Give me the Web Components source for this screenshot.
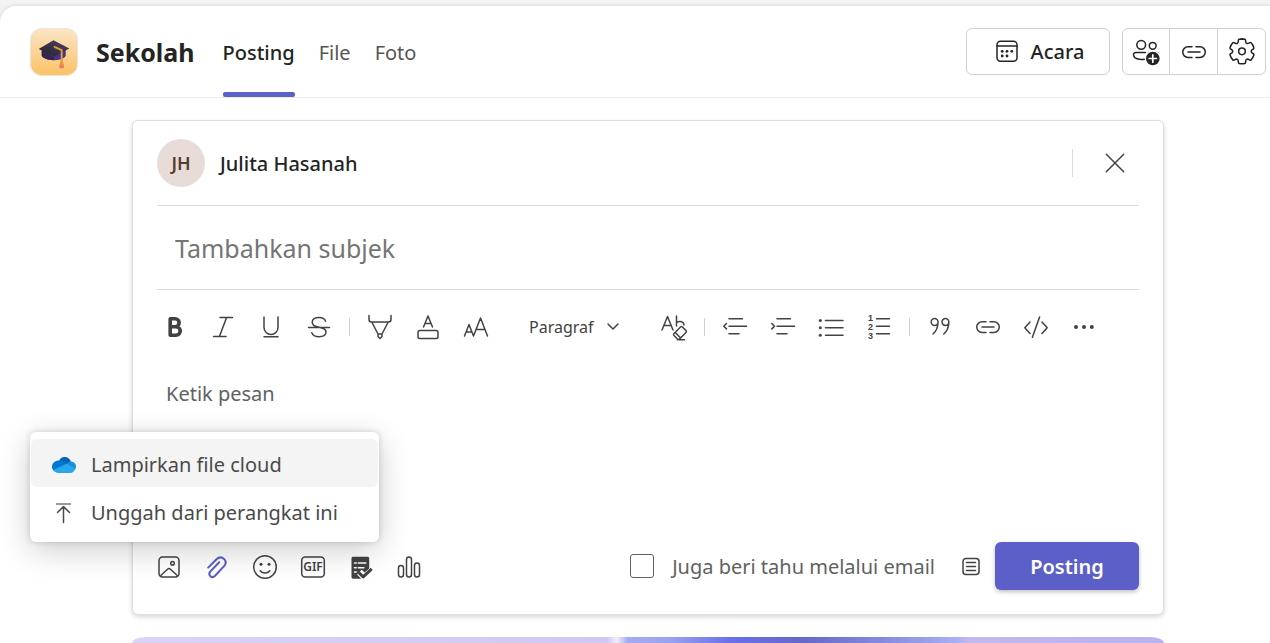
<!DOCTYPE html>
<html lang="id">
<head>
<meta charset="utf-8">
<title>Sekolah - Posting</title>
<style>
  html, body { height: 100%; }
  body { margin: 0; overflow: hidden; background: #f3f3f3; color: #242424; font: 20px/28px "Noto Sans", "Open Sans", sans-serif; }
</style>
</head>
<body>
<channel-page>
  <channel-header slot="header" name="Sekolah"></channel-header>
  <post-composer author="Julita Hasanah" initials="JH">
    <attach-menu slot="attach-menu">
      <menu-entry icon="cloud" active>Lampirkan file cloud</menu-entry>
      <menu-entry icon="upload">Unggah dari perangkat ini</menu-entry>
    </attach-menu>
  </post-composer>
  <channel-banner></channel-banner>
</channel-page>

<script>
const ICONS = {
  bold: '<path stroke-width="3.6" d="M7.2 3.8h5a3.9 3.9 0 0 1 0 7.9h-5zM7.2 11.7h5.8a4.2 4.2 0 0 1 0 8.5H7.2z"/>',
  italic: '<path d="M9 2.5h12.5M2.5 21.5H15M15.6 2.5 8.4 21.5"/>',
  underline: '<path d="M5 2v10.5a7 7 0 0 0 14 0V2M5 21.7h14"/>',
  strike: '<path d="M18.6 6.2C17.5 3.500 15 2.500 12 2.500c-4 0-6.800 1.700-6.800 4.700 0 3 2.500 4.300 6.800 5 4.500.7 7 1.900 7 4.900 0 3-2.800 4.700-7 4.700-3.500 0-6.200-1.200-7.200-4M1.500 12.500h21"/>',
  highlight: '<path d="M1 .5v4C1 6 2 7 3.500 7h17C22 7 23 6 23 4.500v-4M3.800 7l6.200 12h4l6.200-12M10 19v2.500l2 2 2-2V19"/>',
  fontcolor: '<path d="M7.500 12 12 1l4.500 11M9 8.500h6"/><rect x="2" y="15.500" width="20" height="8" rx="1.500"/>',
  fontsize: '<path d="M.5 21 5 9.500 9.500 21M2 17h6M9.500 21l7-18 7 18M12 14.500h9"/>',
  clear: '<path d="M0 15 5.500 1.500 11 15M2 10.500h7M14.500 1v10M14.500 8c1-2 7-2.500 7.500 2M12 18.500l6.500-6.500c.6-.6 1.300-.6 1.900 0l3.600 3.600c.6.6.6 1.300 0 1.900l-6.200 6.300c-.8.8-1.800.8-2.600 0L12 20.500c-.6-.6-.6-1.400 0-2zM13.200 17.500l5 5M15.500 24.800h7"/>',
  outdent: '<path d="M3.500 8.500.8 11.200l2.700 2.700M6 3.700h13.500M6 11.200h17.500M6 18.700h10"/>',
  indent: '<path d="M.8 8.500l2.700 2.700L.8 13.900M6 3.700h13.500M6 11.200h17.500M6 18.700h10"/>',
  bullets: '<path d="M6.500 5.500H24M6.500 12.800H24M6.500 20.200H24"/><g fill="currentColor" stroke="none"><circle cx="1.300" cy="5.500" r="1.500"/><circle cx="1.300" cy="12.800" r="1.500"/><circle cx="1.300" cy="20.200" r="1.500"/></g>',
  numbers: '<path d="M9.500 3.700h13M9.500 11.200h13M9.500 18.700h13"/><g fill="currentColor" stroke="none" font-family="Liberation Sans, sans-serif" font-size="9" font-weight="700"><text x="1" y="6">1</text><text x="1" y="15">2</text><text x="1" y="24">3</text></g>',
  quote: '<path d="M10 7a3.400 3.400 0 1 1-6.800 0 3.400 3.400 0 0 1 6.800 0c0 5-1.500 9-5 12M20.800 7A3.400 3.400 0 1 1 14 7a3.400 3.400 0 0 1 6.800 0c0 5-1.500 9-5 12"/>',
  link: '<path d="M10 6.800H6a5.300 5.300 0 0 0 0 10.600h4M14 6.800h4a5.300 5.300 0 0 1 0 10.600h-4M6 12.100h12"/>',
  code: '<path d="M6 7 .8 12.700 6 18.500M18 7l5.200 5.700L18 18.500M15.600 2 8.400 22.200"/>',
  more: '<g fill="currentColor" stroke="none"><circle cx="4" cy="12" r="2"/><circle cx="12" cy="12" r="2"/><circle cx="19.800" cy="12" r="2"/></g>',
  chevron: '<path d="M7 9l5 5 5-5"/>',
  close: '<path d="M3.300 3.300l17.400 17.400M20.700 3.300 3.300 20.700"/>',
  calendar: '<rect x="2" y="1.200" width="20" height="20" rx="3.500"/><path d="M2 6h20"/><g fill="currentColor" stroke="none"><circle cx="7.200" cy="11.300" r="1.400"/><circle cx="12" cy="11.300" r="1.400"/><circle cx="16.800" cy="11.300" r="1.400"/><circle cx="7.200" cy="16" r="1.400"/><circle cx="12" cy="16" r="1.400"/></g>',
  people: '<circle cx="7.200" cy="4.800" r="4.400"/><circle cx="18.700" cy="5.800" r="3.400"/><path d="M11.500 12.500H2c-1.700 0-2.700 1-2.500 2.500.5 3.500 5.500 5.300 11 4.200M14.500 12.500h8c1 0 1.800.5 2 1.500"/><circle cx="18.800" cy="18.500" r="8" fill="#fff" stroke="none"/><circle cx="18.800" cy="18.500" r="6.800" fill="currentColor" stroke="none"/><path stroke="#fff" stroke-width="1.700" d="M18.800 14.800v7.400M15.100 18.500h7.400"/>',
  gear: '<g transform="translate(-3.400 -4) scale(1.280)"><path stroke-width="1.200" d="M12.010 2.250c.74 0 1.470.1 2.180.25.32.07.55.33.59.65l.17 1.530a1.380 1.380 0 0 0 1.920 1.110l1.400-.61c.3-.13.64-.06.85.17a9.800 9.800 0 0 1 2.200 3.800c.1.3 0 .63-.26.82l-1.250.92a1.380 1.380 0 0 0 0 2.220l1.250.92c.26.19.36.52.27.82a9.800 9.800 0 0 1-2.200 3.800.75.75 0 0 1-.85.17l-1.400-.62a1.380 1.380 0 0 0-1.930 1.120l-.17 1.520a.75.75 0 0 1-.58.65 9.520 9.520 0 0 1-4.400 0 .75.75 0 0 1-.57-.65l-.17-1.520a1.380 1.380 0 0 0-1.930-1.110l-1.400.62a.75.75 0 0 1-.85-.18 9.800 9.800 0 0 1-2.200-3.800c-.1-.3 0-.63.27-.82l1.240-.92a1.380 1.380 0 0 0 0-2.220l-1.240-.92a.75.75 0 0 1-.28-.82 9.800 9.800 0 0 1 2.200-3.800c.23-.23.57-.3.86-.17l1.400.62c.4.17.86.15 1.250-.08.38-.22.63-.6.68-1.040l.17-1.530a.75.75 0 0 1 .58-.65c.72-.16 1.450-.24 2.200-.25Z"/><circle cx="12" cy="12" r="2.600" stroke-width="1.200"/></g>',
  image: '<rect x="2" y="2" width="20" height="20" rx="3.500"/><circle cx="15.500" cy="8.200" r="1.800"/><path d="M3.500 20.800l7-6.600c.9-.9 2.100-.9 3 0l7 6.600"/>',
  attach: '<path stroke-width="2" d="M3.200 12.600l8.300-8.400c4.900-4.600 12 1.200 7.800 6.700l-9.200 9.900c-3.400 3.200-7.500-.8-4.900-4.200l9-9.300"/>',
  smile: '<circle cx="12" cy="12" r="11.300"/><path d="M7.200 15.700c2.400 3 7.200 3 9.600 0"/><g fill="currentColor" stroke="none"><circle cx="8" cy="9.200" r="1.500"/><circle cx="16" cy="9.200" r="1.500"/></g>',
  gif: '<rect x=".7" y="1.900" width="22.600" height="20.200" rx="3.500"/><text x="12" y="16.300" font-size="12" font-weight="600" text-anchor="middle" fill="currentColor" stroke="none">GIF</text>',
  form: '<path fill="currentColor" stroke="none" d="M4.200 1.700h14.300c1 0 1.700.7 1.700 1.700v10l-4.500 4.200-3-2.800-4.700 4.700 4.200 4.200h-8c-1 0-1.700-.7-1.700-1.700V3.400c0-1 .7-1.700 1.700-1.700z"/><path stroke="#fff" stroke-width="1.600" d="M9.300 8h7.500M9.300 12.700h5.500M5.500 8h1.700M5.500 12.700h1.700M5.500 17h1.700"/><path stroke-width="3" stroke-linecap="butt" d="M9.800 17.700l4.400 4.200 8.500-8"/>',
  poll: '<rect x="1.500" y="10.500" width="5" height="11.500" rx="2.500"/><rect x="9.500" y="2" width="5" height="20" rx="2.500"/><rect x="17.500" y="8" width="5" height="14" rx="2.500"/>',
  note: '<rect x="4" y="4.500" width="16" height="16" rx="3"/><path d="M7.500 8.500h9M7.500 12.500h9M7.500 16.500h9"/>',
  upload: '<path stroke="#9a9a9a" stroke-width="2" stroke-linecap="butt" d="M4 3h15"/><path d="M11.500 21.500V5.500M5.500 11.500l6-6 6 6"/>',
  cloud: '<g stroke="none"><path fill="#0364b8" d="M7 8C8 5.500 10 4 12.700 4c3 0 5.300 1.800 6.100 4.600L14 13z"/><path fill="#0078d4" d="M7.300 7.500c1.500 0 2.900.5 4 1.300l4 2.500L5 18.500C2 18.500 0 16.500 0 13.700c0-3.500 3-6.200 7.300-6.200z"/><path fill="#1490df" d="M18.500 8.500c3.200 0 5.500 2.200 5.500 5 0 1.200-.4 2.200-1 3L14.500 11c1.200-1.600 2.500-2.500 4-2.500z"/><path fill="#28a8ea" d="M14.600 10.800 23.300 16c-1 2.200-2.500 4-5 4H6.500c-2.500 0-4.300-1.200-5.300-2.900z"/></g>'
};

class TeamIcon extends HTMLElement {
  connectedCallback() {
    this.attachShadow({ mode: 'open' }).innerHTML = `
      <style>
        :host { display: block; width: 24px; height: 24px; flex: none; }
        svg { display: block; overflow: visible; }
      </style>
      <svg width="24" height="24" viewBox="0 0 24 24" fill="none" stroke="currentColor" stroke-width="1.500" stroke-linecap="round" stroke-linejoin="round" aria-hidden="true">${ICONS[this.getAttribute('name')]}</svg>`;
  }
}
customElements.define('team-icon', TeamIcon);

class IconButton extends HTMLElement {
  connectedCallback() {
    this.attachShadow({ mode: 'open' }).innerHTML = `
      <style>
        :host { display: block; flex: none; color: #424242; }
        :host([accent]) { color: #5b5fc7; }
        button { display: grid; place-items: center; box-sizing: border-box; width: 48px; height: 48px; padding: var(--icon-top, 0px) 0 0; border: 0; background: none; color: inherit; font: inherit; cursor: pointer; }
      </style>
      <button type="button" aria-label="${this.getAttribute('label')}"><team-icon name="${this.getAttribute('icon')}"></team-icon></button>`;
  }
}
customElements.define('icon-button', IconButton);

class ChannelPage extends HTMLElement {
  connectedCallback() {
    this.attachShadow({ mode: 'open' }).innerHTML = `
      <style>
        :host { display: block; height: 100%; box-sizing: border-box; padding-top: 6px; }
        .surface { height: 100%; box-sizing: border-box; background: #fff; border-top-left-radius: 16px; box-shadow: 0 0 4px rgba(0,0,0,.14); }
        main { display: flex; flex-direction: column; gap: 22px; padding: 22px 106px 0 132px; }
      </style>
      <div class="surface"><slot name="header"></slot><main><slot></slot></main></div>`;
  }
}
customElements.define('channel-page', ChannelPage);

class ChannelHeader extends HTMLElement {
  connectedCallback() {
    this.attachShadow({ mode: 'open' }).innerHTML = `
      <style>
        :host { display: flex; align-items: center; height: 91px; padding: 0 4px 0 30px; border-bottom: 1px solid #ebebeb; }
        .logo { display: block; flex: none; width: 48px; height: 48px; }
        h1 { margin: 0 28px 0 18px; font-size: 25px; line-height: 36px; font-weight: 700; }
        nav { display: flex; align-self: stretch; gap: 24px; }
        nav a { display: flex; align-items: center; position: relative; padding-top: 2px; color: #555; text-decoration: none; }
        nav a[aria-current] { color: #242424; font-weight: 500; }
        nav a[aria-current]::after { content: ""; position: absolute; left: 0; right: 0; bottom: 0; height: 5px; border-radius: 2px; background: #5b5fc7; }
        .actions { display: flex; gap: 12px; margin-left: auto; }
        .event { display: flex; align-items: center; justify-content: center; gap: 12px; box-sizing: border-box; width: 144px; height: 47px; padding: 0 0 0 3px; border: 1px solid #d1d1d1; border-radius: 6px; background: #fff; color: #242424; font: inherit; font-weight: 500; }
        .group { display: flex; box-sizing: border-box; height: 47px; border: 1px solid #d1d1d1; border-radius: 6px; }
        .group button { display: grid; place-items: center; box-sizing: border-box; width: 48px; padding: 0; border: 0; border-right: 1px solid #d1d1d1; background: none; color: #242424; }
        .group button:last-child { width: 47px; border-right: 0; }
        .group button:first-child { width: 47px; }
      </style>
      <svg class="logo" viewBox="0 0 47 47" aria-hidden="true">
        <defs>
          <linearGradient id="tile" x1="0" y1="0" x2="0" y2="1"><stop offset="0" stop-color="#fbe5c6"/><stop offset="1" stop-color="#fbc266"/></linearGradient>
          <linearGradient id="cap" x1="0" y1="1" x2="1" y2="0"><stop offset="0" stop-color="#242330"/><stop offset="1" stop-color="#51415f"/></linearGradient>
          <linearGradient id="tassel" x1="0" y1="0" x2="0" y2="1"><stop offset="0" stop-color="#e9a23b"/><stop offset="1" stop-color="#f7705c"/></linearGradient>
        </defs>
        <rect x=".5" y=".5" width="46" height="46" rx="11" fill="url(#tile)" stroke="#ece6df"/>
        <path d="M11.500 20v7c0 2 5 4.500 12 4.500S35 29 35 27v-7z" fill="#49338a"/>
        <path d="M11.500 21l12 7.500v3c-7 0-12-2.500-12-4.500z" fill="#33264f"/>
        <path d="M8.500 20.500 23 12l15.500 8L24 28z" fill="url(#cap)"/>
        <path d="M24 18.500l7 3.200V32" fill="none" stroke="#e0a23c" stroke-width="1.800" stroke-linecap="round"/>
        <path d="M30.200 31.500h1.600l1.700 6.500c0 2-5 2-5 0z" fill="url(#tassel)"/>
      </svg>
      <h1>${this.getAttribute('name')}</h1>
      <nav><a href="#posting" aria-current="page">Posting</a><a href="#file">File</a><a href="#foto">Foto</a></nav>
      <div class="actions">
        <button class="event" type="button"><team-icon name="calendar"></team-icon>Acara</button>
        <div class="group">
          <button type="button" aria-label="Tambah anggota"><team-icon name="people"></team-icon></button>
          <button type="button" aria-label="Salin tautan"><team-icon name="link"></team-icon></button>
          <button type="button" aria-label="Pengaturan"><team-icon name="gear"></team-icon></button>
        </div>
      </div>`;
  }
}
customElements.define('channel-header', ChannelHeader);

class MenuEntry extends HTMLElement {
  connectedCallback() {
    this.attachShadow({ mode: 'open' }).innerHTML = `
      <style>
        :host { display: block; }
        button { display: flex; align-items: center; gap: 15px; box-sizing: border-box; width: 100%; height: 48px; padding: 3px 21px 0; border: 0; border-radius: 6px; background: none; color: #4a4a4a; font: inherit; text-align: left; white-space: nowrap; }
        :host([active]) button { background: #f4f4f4; }
      </style>
      <button type="button" role="menuitem"><team-icon name="${this.getAttribute('icon')}"></team-icon><slot></slot></button>`;
  }
}
customElements.define('menu-entry', MenuEntry);

class AttachMenu extends HTMLElement {
  connectedCallback() {
    this.setAttribute('role', 'menu');
    this.attachShadow({ mode: 'open' }).innerHTML = `
      <style>
        :host { display: block; box-sizing: border-box; width: 349px; padding: 7px 1px; border-radius: 6px; background: #fff; box-shadow: 0 8px 32px rgba(0,0,0,.2), 0 0 6px rgba(0,0,0,.16); }
      </style>
      <slot></slot>`;
  }
}
customElements.define('attach-menu', AttachMenu);

class PostComposer extends HTMLElement {
  connectedCallback() {
    const tools = list => list.map(([icon, label]) => `<icon-button icon="${icon}" label="${label}"></icon-button>`).join('');
    this.attachShadow({ mode: 'open' }).innerHTML = `
      <style>
        :host { display: block; padding: 18px 24px 24px; border: 1px solid #dedede; border-radius: 6px; background: #fff; box-shadow: 0 2px 5px rgba(0,0,0,.16); }
        header { display: flex; align-items: center; height: 48px; padding-bottom: 18px; border-bottom: 1px solid #dcdcdc; }
        .avatar { display: grid; place-items: center; width: 48px; height: 48px; margin-right: 15px; border-radius: 50%; background: #e8dcd8; color: #573b2e; font-size: 18px; font-weight: 600; }
        .author { font-weight: 500; padding-top: 2px; }
        .rule { width: 1px; height: 28px; margin-left: auto; margin-right: 18px; background: #dcdcdc; }
        input, textarea { display: block; box-sizing: border-box; width: 100%; border: 0; outline: 0; padding: 0; background: none; color: #242424; font: inherit; resize: none; }
        ::placeholder { color: #757575; opacity: 1; }
        .subject { height: 84px; padding: 0 18px; border-bottom: 1px solid #dcdcdc; font-size: 25px; }
        .tools { display: flex; align-items: center; margin: 13px 0 0 -6px; height: 48px; }
        .sep { flex: none; width: 1px; height: 18px; margin: 0 6px; background: #d1d1d1; }
        .style { position: relative; display: flex; align-items: center; color: #424242; }
        select { appearance: none; width: 150px; height: 48px; padding: 0 0 0 29px; border: 0; background: none; color: inherit; font: inherit; font-size: 16px; }
        .style team-icon { position: absolute; right: 25px; pointer-events: none; }
        .message { height: 191px; padding: 29px 9px 0; }
        .message::placeholder { color: #616161; }
        footer { --icon-top: 2px; display: flex; align-items: center; height: 48px; margin-left: -12px; }
        .attach { position: relative; }
        .popup { position: absolute; left: -163px; bottom: 100%; }
        label { display: flex; align-items: center; gap: 18px; margin-left: auto; color: #616161; white-space: nowrap; }
        label span { padding-top: 2px; }
        label input { appearance: none; width: 24px; height: 24px; margin: 0; border: 1px solid #616161; border-radius: 3px; }
        footer > team-icon { margin: 0 12px 0 24px; color: #424242; }
        .submit { width: 144px; height: 48px; padding: 2px 0 0; border: 0; border-radius: 6px; background: #5b5fc7; color: #fff; font: inherit; font-weight: 600; box-shadow: 0 2px 4px rgba(0,0,0,.25); }
      </style>
      <header>
        <span class="avatar">${this.getAttribute('initials')}</span>
        <span class="author">${this.getAttribute('author')}</span>
        <span class="rule"></span>
        <icon-button icon="close" label="Tutup"></icon-button>
      </header>
      <input class="subject" type="text" aria-label="Subjek" placeholder="Tambahkan subjek">
      <div class="tools" role="toolbar" aria-label="Format">
        ${tools([['bold', 'Tebal'], ['italic', 'Miring'], ['underline', 'Garis bawah'], ['strike', 'Coret']])}
        <span class="sep"></span>
        ${tools([['highlight', 'Sorotan'], ['fontcolor', 'Warna font'], ['fontsize', 'Ukuran font']])}
        <span class="style"><select aria-label="Gaya"><option>Paragraf</option></select><team-icon name="chevron"></team-icon></span>
        ${tools([['clear', 'Hapus format']])}
        <span class="sep"></span>
        ${tools([['outdent', 'Kurangi inden'], ['indent', 'Tambah inden'], ['bullets', 'Daftar berpoin'], ['numbers', 'Daftar bernomor']])}
        <span class="sep"></span>
        ${tools([['quote', 'Kutipan'], ['link', 'Tautan'], ['code', 'Kode'], ['more', 'Lainnya']])}
      </div>
      <textarea class="message" aria-label="Pesan" placeholder="Ketik pesan"></textarea>
      <footer>
        ${tools([['image', 'Gambar']])}
        <div class="attach">
          <icon-button icon="attach" label="Lampirkan" accent></icon-button>
          <div class="popup"><slot name="attach-menu"></slot></div>
        </div>
        ${tools([['smile', 'Emoji'], ['gif', 'GIF'], ['form', 'Formulir'], ['poll', 'Polling']])}
        <label><input type="checkbox"><span>Juga beri tahu melalui email</span></label>
        <team-icon name="note"></team-icon>
        <button class="submit" type="button">Posting</button>
      </footer>`;
  }
}
customElements.define('post-composer', PostComposer);

class ChannelBanner extends HTMLElement {
  connectedCallback() {
    this.attachShadow({ mode: 'open' }).innerHTML = `
      <style>
        :host { display: block; height: 6px; border-radius: 14px 14px 0 0 / 6px 6px 0 0;
          background: linear-gradient(90deg, #d9d4f7 0%, #cfc8f3 46%, #f1eefc 47%, #a3acf0 48%, #9aa3f0 52%, #6b6fea 58%, #6669c8 65%, #8087dc 72%, #a9b0f2 80%, #c3b8ee 81%, #b9b2f0 100%); }
      </style>`;
  }
}
customElements.define('channel-banner', ChannelBanner);
</script>
</body>
</html>
